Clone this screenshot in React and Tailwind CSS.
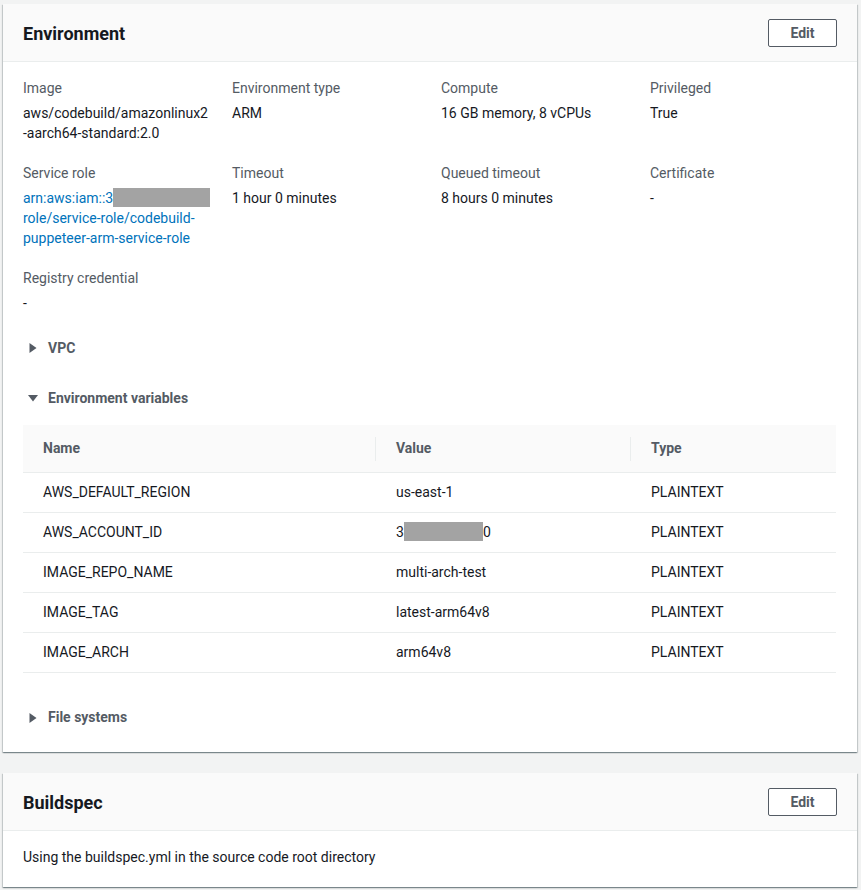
const font = { fontFamily: '"Roboto", "Noto Sans", "Liberation Sans", sans-serif' };

function Caret({ open }) {
  return (
    <svg width="10" height="10" viewBox="0 0 10 10" className="shrink-0">
      {open ? <path d="M0 2 L10 2 L5 8.5 Z" fill="#545b64" /> : <path d="M1.5 0 L8.5 5 L1.5 10 Z" fill="#545b64" />}
    </svg>
  );
}

function Field({ label, children }) {
  return (
    <div className="flex flex-col">
      <div className="text-[#545b64] text-[14px] leading-[20px] h-[20px]">{label}</div>
      <div className="mt-[5px] text-[#16191f] text-[14px] leading-[20px]">{children}</div>
    </div>
  );
}

function Redact({ w }) {
  return <span className={`inline-block align-top h-[19px] bg-[#a3a3a3] ${w}`} />;
}

function CardHeader({ title }) {
  return (
    <div className="flex items-center justify-between h-[58px] pt-[1px] px-[20px] bg-[#fafafa] border-b border-[#eaeded]">
      <h2 className="text-[18px] font-bold text-[#16191f]">{title}</h2>
      <button className="h-[28px] w-[69px] border border-[#545b64] rounded-[2px] bg-white text-[14px] font-bold text-[#545b64]">Edit</button>
    </div>
  );
}

const vars = [
  ["AWS_DEFAULT_REGION", "us-east-1"],
  ["AWS_ACCOUNT_ID", null],
  ["IMAGE_REPO_NAME", "multi-arch-test"],
  ["IMAGE_TAG", "latest-arm64v8"],
  ["IMAGE_ARCH", "arm64v8"],
];

const card = "bg-white shadow-[0_1px_1px_0_rgba(0,28,36,0.3),1px_1px_1px_0_rgba(0,28,36,0.15),-1px_1px_1px_0_rgba(0,28,36,0.15)]";

export default function App() {
  return (
    <div style={font} className="w-[861px] h-[890px] bg-[#f2f3f3] pt-[4px] pl-[3px] pr-[4px]">
      <div className={`${card} h-[748px]`}>
        <CardHeader title="Environment" />
        <div className="px-[20px] pt-[16px]">
          <div className="grid grid-cols-[189px_189px_189px_189px] gap-x-[20px] gap-y-[20px]">
            <Field label="Image">aws/codebuild/amazonlinux2<br />-aarch64-standard:2.0</Field>
            <Field label="Environment type">ARM</Field>
            <Field label="Compute">16 GB memory, 8 vCPUs</Field>
            <Field label="Privileged">True</Field>
            <Field label="Service role">
              <span className="text-[#0073bb]"><span className="whitespace-nowrap">arn:aws:iam::3<Redact w="w-[97px]" /></span><br />role/service-role/codebuild-<br />puppeteer-arm-service-role</span>
            </Field>
            <Field label="Timeout">1 hour 0 minutes</Field>
            <Field label="Queued timeout">8 hours 0 minutes</Field>
            <Field label="Certificate">-</Field>
            <Field label="Registry credential">-</Field>
          </div>
          <div className="mt-[25px] flex items-center gap-[10px] h-[20px] text-[14px] font-bold text-[#545b64] pl-[5px]">
            <Caret /> VPC
          </div>
          <div className="mt-[30px] flex items-center gap-[10px] h-[20px] text-[14px] font-bold text-[#545b64] pl-[5px]">
            <Caret open /> Environment variables
          </div>
          <table className="mt-[17px] w-[813px] text-[14px] border-collapse">
            <thead>
              <tr className="bg-[#fafafa] h-[47px] border-b border-[#eaeded]">
                <th className="text-left font-bold text-[#545b64] pl-[20px] w-[353px] relative">Name<span className="absolute right-0 top-[12px] h-[24px] border-l border-[#eaeded]" /></th>
                <th className="text-left font-bold text-[#545b64] pl-[20px] w-[255px] relative">Value<span className="absolute right-0 top-[12px] h-[24px] border-l border-[#eaeded]" /></th>
                <th className="text-left font-bold text-[#545b64] pl-[20px]">Type</th>
              </tr>
            </thead>
            <tbody>
              {vars.map(([n, v]) => (
                <tr key={n} className="h-[40px] border-b border-[#eaeded] text-[#16191f]">
                  <td className="pl-[20px]">{n}</td>
                  <td className="pl-[20px]">{v === null ? <span>3<Redact w="w-[79px]" />0</span> : v}</td>
                  <td className="pl-[20px]">PLAINTEXT</td>
                </tr>
              ))}
            </tbody>
          </table>
          <div className="mt-[35px] flex items-center gap-[10px] h-[20px] text-[14px] font-bold text-[#545b64] pl-[5px]">
            <Caret /> File systems
          </div>
        </div>
      </div>
      <div className={`${card} mt-[21px] h-[114px]`}>
        <CardHeader title="Buildspec" />
        <div className="px-[20px] pt-[16px] text-[14px] leading-[20px] text-[#16191f]">Using the buildspec.yml in the source code root directory</div>
      </div>
    </div>
  );
}
